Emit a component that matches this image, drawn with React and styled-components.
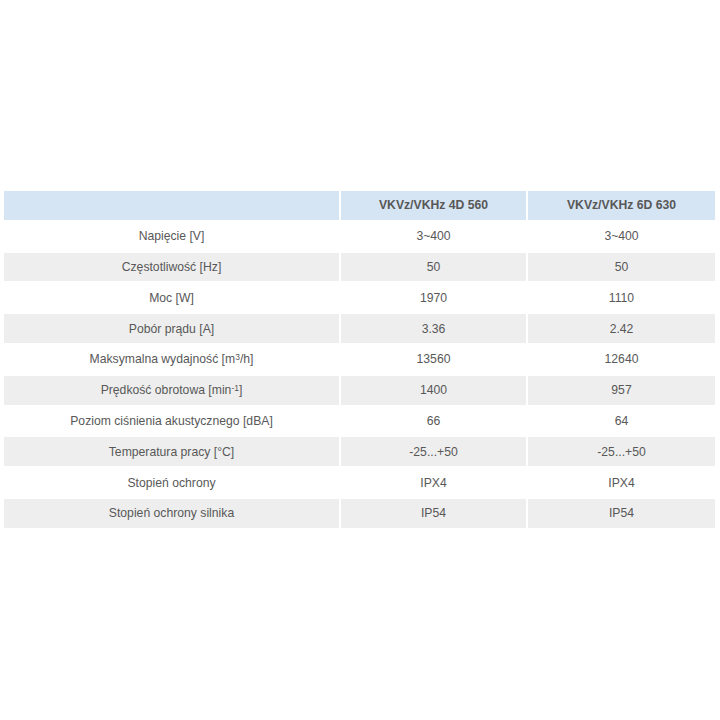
import React from 'react';
import styled, { createGlobalStyle } from 'styled-components';

const GlobalStyle = createGlobalStyle`
  body {
    margin: 0;
    background: #ffffff;
    font-family: "Liberation Sans", Arial, sans-serif;
  }
`;

const Page = styled.div`
  width: 720px;
  height: 720px;
  padding: 191px 5px 0 4px;
  box-sizing: border-box;
`;

const Table = styled.div`
  display: grid;
  grid-template-columns: 335px 185px 187px;
  grid-auto-rows: 28.8px;
  row-gap: 2px;
  column-gap: 2px;
`;

const Cell = styled.div`
  display: flex;
  align-items: center;
  justify-content: center;
  font-size: 12.2px;
  color: #585858;
  background: ${(p) => (p.$head ? '#d6e5f4' : p.$shade ? '#eeeeee' : '#ffffff')};
  font-weight: ${(p) => (p.$head ? 'bold' : 'normal')};

  sup {
    font-size: 8.5px;
    line-height: 0;
    position: relative;
    top: -2px;
  }
`;

const rows = [
  ['Napięcie [V]', '3~400', '3~400'],
  ['Częstotliwość [Hz]', '50', '50'],
  ['Moc [W]', '1970', '1110'],
  ['Pobór prądu [A]', '3.36', '2.42'],
  [<>Maksymalna wydajność [m<sup>3</sup>/h]</>, '13560', '12640'],
  [<>Prędkość obrotowa [min<sup>-1</sup>]</>, '1400', '957'],
  ['Poziom ciśnienia akustycznego [dBA]', '66', '64'],
  ['Temperatura pracy [°C]', '-25...+50', '-25...+50'],
  ['Stopień ochrony', 'IPX4', 'IPX4'],
  ['Stopień ochrony silnika', 'IP54', 'IP54'],
];

export default function App() {
  return (
    <>
      <GlobalStyle />
      <Page>
        <Table>
          <Cell $head />
          <Cell $head>VKVz/VKHz 4D 560</Cell>
          <Cell $head>VKVz/VKHz 6D 630</Cell>
          {rows.map((r, i) =>
            r.map((v, j) => (
              <Cell key={`${i}-${j}`} $shade={i % 2 === 1}>
                {v}
              </Cell>
            ))
          )}
        </Table>
      </Page>
    </>
  );
}
